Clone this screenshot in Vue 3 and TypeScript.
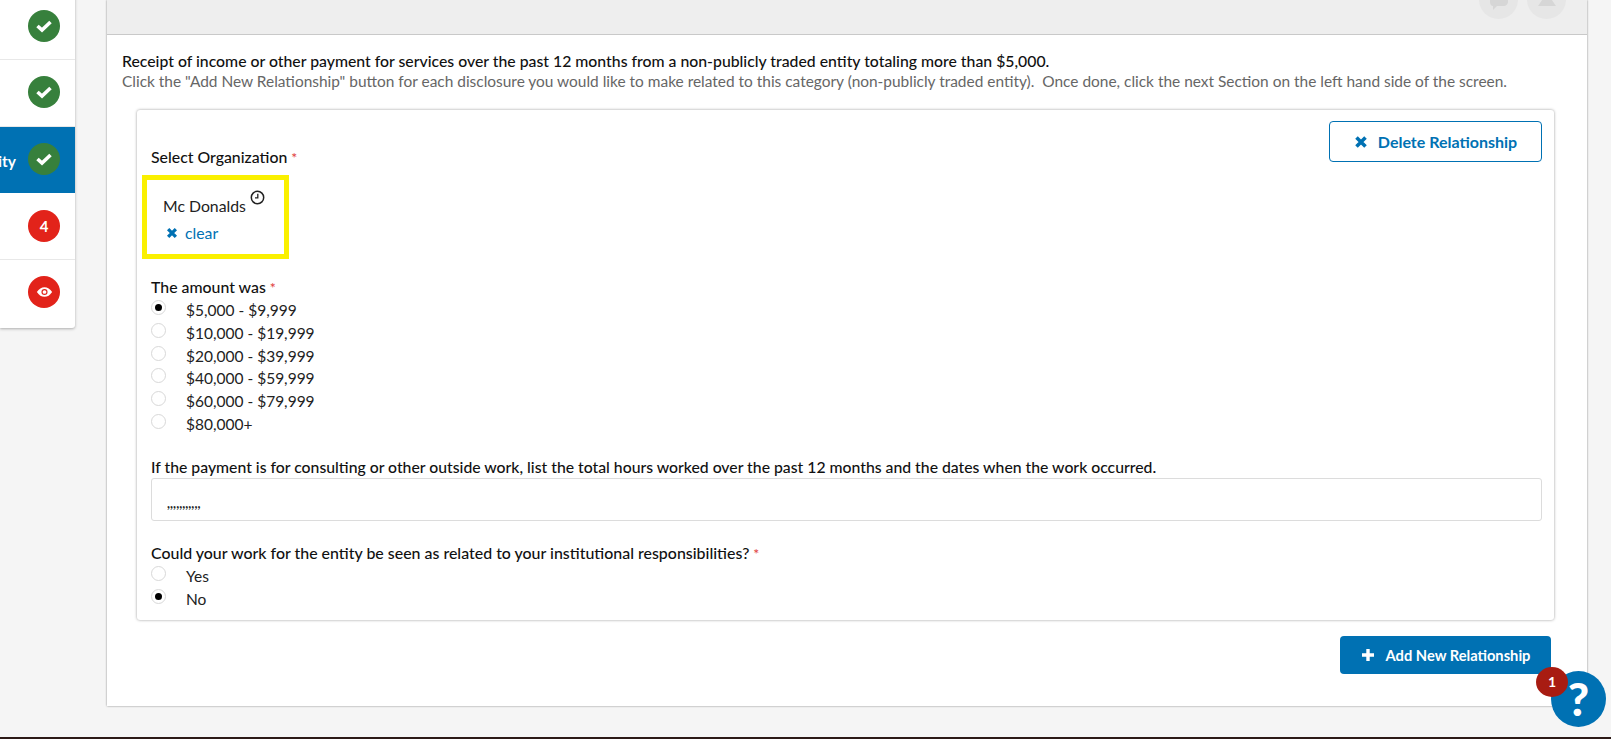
<script setup lang="ts">
type Step = { label: string; kind: "done" | "count" | "view"; active?: boolean };

const steps: Step[] = [
  { label: "", kind: "done" },
  { label: "", kind: "done" },
  { label: "Entity", kind: "done", active: true },
  { label: "", kind: "count" },
  { label: "", kind: "view" },
];

const amounts = [
  "$5,000 - $9,999",
  "$10,000 - $19,999",
  "$20,000 - $39,999",
  "$40,000 - $59,999",
  "$60,000 - $79,999",
  "$80,000+",
];
</script>

<template>
  <div class="page">
    <div class="content">
      <ul class="steps">
        <li v-for="(step, i) in steps" :key="i" class="step" :class="[step.kind, { active: step.active }]">
          <span class="step-label">{{ step.label }}</span>
          <span class="status" :class="step.kind">
            <svg v-if="step.kind === 'done'" width="16" height="16" viewBox="0 0 16 16">
              <path d="M1.500 8 6 12 14.500 4" fill="none" stroke="#fff" stroke-width="3.600" />
            </svg>
            <template v-else-if="step.kind === 'count'">4</template>
            <svg v-else width="17" height="12" viewBox="0 0 20 14">
              <path d="M1 7c2.500-3.800 5.500-5.700 9-5.700s6.500 1.900 9 5.700c-2.500 3.800-5.500 5.700-9 5.700S3.500 10.800 1 7z" fill="#fff" />
              <circle cx="10" cy="7" r="3.600" fill="#e2231a" />
              <circle cx="10" cy="7" r="2.200" fill="#fff" />
            </svg>
          </span>
        </li>
      </ul>

      <main class="panel">
        <header class="panel-head">
          <span class="head-btn">
            <svg width="20" height="18" viewBox="0 0 20 18"><path d="M1 0h18v9c0 2-2 4-4 4H8l-4 4v-4C2 13 1 11 1 9z" fill="#d6d6d6" /></svg>
          </span>
          <span class="head-btn">
            <svg width="20" height="18" viewBox="0 0 20 18"><path d="M10 0 19 13H1z" fill="#d6d6d6" /></svg>
          </span>
        </header>

        <section class="panel-body">
          <p class="lead">Receipt of income or other payment for services over the past 12 months from a non-publicly traded entity totaling more than $5,000.</p>
          <p class="hint">Click the "Add New Relationship" button for each disclosure you would like to make related to this category (non-publicly traded entity).&nbsp; Once done, click the next Section on the left hand side of the screen.</p>

          <div class="card">
            <div class="card-actions">
              <button class="btn-outline" type="button">
                <svg width="14" height="14" viewBox="0 0 14 14"><path d="M2.500 2.500l9 9M11.500 2.500l-9 9" stroke="#0071b3" stroke-width="3.600" /></svg>
                Delete Relationship
              </button>
            </div>

            <label class="field-label org-label">Select Organization <em>*</em></label>
            <div class="org-box">
              <div class="org-name">
                Mc Donalds
                <svg class="clock" width="15" height="15" viewBox="0 0 15 15">
                  <circle cx="7.500" cy="7.500" r="6.200" fill="none" stroke="#222" stroke-width="1.500" />
                  <path d="M7.800 3.800v4H5" fill="none" stroke="#222" stroke-width="1.300" />
                </svg>
              </div>
              <a class="clear">
                <svg width="12" height="12" viewBox="0 0 14 14"><path d="M2.500 2.500l9 9M11.500 2.500l-9 9" stroke="#0071b3" stroke-width="3.800" /></svg>
                clear
              </a>
            </div>

            <label class="field-label amount-label">The amount was <em>*</em></label>
            <div class="radio-list">
              <div v-for="(amount, i) in amounts" :key="amount" class="radio-row">
                <span class="radio" :class="{ checked: i === 0 }"></span>
                <span>{{ amount }}</span>
              </div>
            </div>

            <label class="field-label hours-label">If the payment is for consulting or other outside work, list the total hours worked over the past 12 months and the dates when the work occurred.</label>
            <div class="text-input">,,,,,,,,,,,</div>

            <label class="field-label work-label">Could your work for the entity be seen as related to your institutional responsibilities? <em>*</em></label>
            <div class="radio-list">
              <div class="radio-row"><span class="radio"></span><span>Yes</span></div>
              <div class="radio-row"><span class="radio checked"></span><span>No</span></div>
            </div>
          </div>

          <div class="add-row">
            <button class="btn-solid" type="button">
              <svg width="14" height="14" viewBox="0 0 14 14"><path d="M7 1v12M1 7h12" stroke="#fff" stroke-width="3.400" /></svg>
              Add New Relationship
            </button>
          </div>
        </section>
      </main>
    </div>
    <div class="footer-line"></div>

    <div class="help">
      ?
      <span class="help-badge">1</span>
    </div>
  </div>
</template>

<style scoped>
.page {
  position: relative;
  height: 739px;
  overflow: hidden;
  background: #f5f5f5;
  font-family: Lato, "Open Sans", sans-serif;
  font-size: 15.500px;
  color: #222;
  display: flex;
  flex-direction: column;
}

.content {
  flex: 1;
  display: flex;
  align-items: flex-start;
  min-height: 0;
}

.steps {
  list-style: none;
  margin: -6.500px 0 0;
  padding: 0;
  width: 75px;
  flex: none;
  background: #fff;
  border-radius: 0 0 3px 0;
  box-shadow: 0 1px 3px rgba(0, 0, 0, 0.3);
}

.step {
  height: 66.500px;
  box-sizing: border-box;
  display: flex;
  align-items: center;
  justify-content: flex-end;
  gap: 12px;
  padding: 0 15px 1px 0;
  border-bottom: 1px solid #e8e8e8;
  overflow: hidden;
  white-space: nowrap;
}

.step.count {
  padding-bottom: 0;
}

.step:last-child {
  border-bottom: 0;
  height: 68px;
  padding-bottom: 3px;
}

.step.active {
  background: #0071b3;
  color: #fff;
  border-bottom: 0;
  font-weight: 700;
  font-size: 15.500px;
}

.step-label {
  margin-top: 4px;
}

.status {
  flex: none;
  width: 32px;
  height: 32px;
  border-radius: 50%;
  display: flex;
  align-items: center;
  justify-content: center;
  color: #fff;
  font-weight: 700;
  font-size: 15px;
}

.status.done {
  background: #37803c;
}

.status.count,
.status.view {
  background: #e2231a;
}

.panel {
  margin-left: 32px;
  width: 1480px;
  box-sizing: border-box;
  height: 706px;
  background: #fff;
  box-shadow: 0 0 2px rgba(0, 0, 0, 0.45);
  flex: none;
}

.panel-head {
  height: 34px;
  background: #eeeeee;
  border-bottom: 1px solid #c9c9c9;
  display: flex;
  justify-content: flex-end;
  gap: 9px;
  padding-right: 21px;
  overflow: hidden;
}

.head-btn {
  width: 39px;
  height: 39px;
  margin-top: -20px;
  border-radius: 50%;
  background: #e6e6e6;
  display: flex;
  align-items: center;
  justify-content: center;
  padding-top: 4px;
  box-sizing: border-box;
}

.panel-body {
  padding: 15px 19px 0 15px;
}

.lead,
.hint {
  margin: 0;
  line-height: 21px;
  white-space: nowrap;
}

.lead {
  color: #111;
  font-weight: 500;
  font-size: 15.800px;
}

.hint {
  color: #666;
  font-size: 15.450px;
}

.card {
  margin: 18px 14px 0 15px;
  border-radius: 3px;
  background: #fff;
  box-shadow: 0 0 3px rgba(0, 0, 0, 0.4);
  padding: 11px 12px 10px 14px;
  height: 510px;
  box-sizing: border-box;
}

.card-actions {
  display: flex;
  justify-content: flex-end;
  height: 0;
}

.btn-outline {
  width: 213px;
  height: 41px;
  flex: none;
  border: 1px solid #0071b3;
  border-radius: 4px;
  background: #fff;
  color: #0071b3;
  font: 700 16px Lato, sans-serif;
  display: flex;
  align-items: center;
  justify-content: center;
  gap: 10px;
}

.field-label {
  display: block;
  font-weight: 500;
  font-size: 15.850px;
  color: #111;
  line-height: 22px;
}

.field-label em {
  color: #e03a3a;
  font-style: normal;
  font-size: 14px;
}

.org-label {
  margin-top: 25px;
}

.org-box {
  margin: 6px 0 0 -9px;
  width: 147px;
  height: 84px;
  box-sizing: border-box;
  border: 5px solid #faf000;
  padding: 9px 0 0 16px;
  font-size: 15.800px;
}

.org-name {
  position: relative;
  line-height: 26px;
  height: 26px;
  margin-top: 4px;
}

.clock {
  position: absolute;
  left: 87px;
  top: -3px;
}

.clear {
  display: flex;
  align-items: center;
  gap: 7px;
  padding-left: 3px;
  margin-top: 1px;
  line-height: 26px;
  color: #0071b3;
}

.amount-label {
  margin-top: 17px;
}

.radio-list {
  display: flex;
  flex-direction: column;
}

.radio-row {
  height: 22.700px;
  display: flex;
  align-items: center;
  gap: 20px;
  line-height: 22px;
}

.radio {
  width: 15px;
  height: 15px;
  margin-top: -5px;
  box-sizing: border-box;
  border: 1px solid #d8d8d8;
  border-radius: 50%;
  background: #fff;
  flex: none;
  position: relative;
}

.radio.checked::after {
  content: "";
  position: absolute;
  left: 3px;
  top: 3px;
  width: 7px;
  height: 7px;
  border-radius: 50%;
  background: #000;
}

.hours-label {
  margin-top: 21px;
  font-size: 15.780px;
}

.text-input {
  height: 43px;
  box-sizing: border-box;
  border: 1px solid #dcdcdc;
  border-radius: 3px;
  padding: 12px 0 0 15px;
  font-size: 13px;
  font-weight: 700;
  line-height: 24px;
}

.work-label {
  margin-top: 21px;
  font-size: 15.930px;
}

.add-row {
  display: flex;
  justify-content: flex-end;
  margin: 16px 17px 0 0;
}

.btn-solid {
  width: 211px;
  height: 38px;
  border: 0;
  border-radius: 4px;
  background: #0071b3;
  color: #fff;
  font: 700 14.700px Lato, sans-serif;
  display: flex;
  align-items: center;
  justify-content: center;
  gap: 11px;
}

.footer-line {
  height: 2px;
  flex: none;
  background: #2c1a17;
}

.help {
  position: absolute;
  left: 1551px;
  top: 671px;
  width: 55px;
  height: 56px;
  border-radius: 50%;
  background: #0071b3;
  color: #fff;
  font: 900 46px/56px Lato, sans-serif;
  text-align: center;
}

.help-badge {
  position: absolute;
  left: -15px;
  top: -4px;
  width: 32px;
  height: 30px;
  border-radius: 50%;
  background: #a81c12;
  font: 700 14px/30px Lato, sans-serif;
}
</style>
